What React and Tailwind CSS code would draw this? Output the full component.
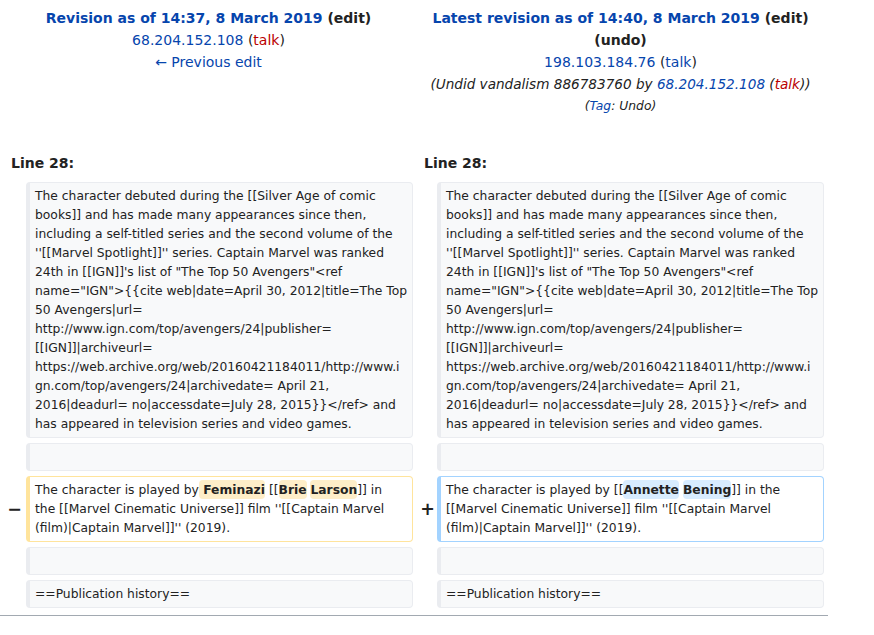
import React from "react";

const LINES = [
  "The character debuted during the [[Silver Age of comic",
  "books]] and has made many appearances since then,",
  "including a self-titled series and the second volume of the",
  "''[[Marvel Spotlight]]'' series. Captain Marvel was ranked",
  "24th in [[IGN]]'s list of \"The Top 50 Avengers\"<ref",
  "name=\"IGN\">{{cite web|date=April 30, 2012|title=The Top",
  "50 Avengers|url=",
  "http://www.ign.com/top/avengers/24|publisher=",
  "[[IGN]]|archiveurl=",
  "https://web.archive.org/web/20160421184011/http://www.i",
  "gn.com/top/avengers/24|archivedate= April 21,",
  "2016|deadurl= no|accessdate=July 28, 2015}}</ref> and",
  "has appeared in television series and video games.",
];

const cell =
  "rounded-[4px] border border-l-4 pl-[5px] pr-[5px] py-[3.5px] text-[12.32px] leading-[19px] text-[#222] whitespace-pre";
const ctx = cell + " border-[#eaecf0] bg-[#f8f9fa]";
const del = cell + " border-[#ffe49c] bg-white";
const add = cell + " border-[#a3d3ff] bg-white";
const delHl = "font-bold rounded-[4px] bg-[#feeec8] py-[2.5px]";
const addHl = "font-bold rounded-[4px] bg-[#d8ecff] py-[2.5px]";

function Lines({ lines }) {
  return lines.map((l, i) => <div key={i}>{l}</div>);
}

function Context() {
  return (
    <div className={ctx}>
      <Lines lines={LINES} />
    </div>
  );
}

function Empty() {
  return <div className={ctx}>{"\u00a0"}</div>;
}

function Pub() {
  return <div className={ctx}>==Publication history==</div>;
}

export default function App() {
  return (
    <div
      className="w-[874px] h-[635px] bg-white text-[#222] overflow-hidden"
      style={{ fontFamily: '"DejaVu Sans", sans-serif' }}
    >
      <div className="w-[828px]">
        {/* Header */}
        <div className="grid grid-cols-[409px_407px] gap-x-[4px] pl-[4px] pt-[7px] text-[14px] leading-[22px] text-center">
          <div>
            <div className="font-bold">
              <span className="text-[#0645ad]">Revision as of 14:37, 8 March 2019</span>{" "}
              <span className="text-[#222]">(edit)</span>
            </div>
            <div>
              <span className="text-[#0645ad]">68.204.152.108</span> (
              <span className="text-[#ba0000]">talk</span>)
            </div>
            <div className="text-[#0645ad]">← Previous edit</div>
          </div>
          <div>
            <div className="font-bold">
              <span className="text-[#0645ad]">Latest revision as of 14:40, 8 March 2019</span>{" "}
              <span className="text-[#222]">(edit)</span>
            </div>
            <div className="font-bold text-[#222]">(undo)</div>
            <div>
              <span className="text-[#0645ad]">198.103.184.76</span> (
              <span className="text-[#0645ad]">talk</span>)
            </div>
            <div className="italic text-[13.6px]">
              (Undid vandalism 886783760 by{" "}
              <span className="text-[#0645ad]">68.204.152.108</span> (
              <span className="text-[#ba0000]">talk</span>))
            </div>
            <div className="italic text-[12.32px]">
              (<span className="text-[#0645ad]">Tag</span>: Undo)
            </div>
          </div>
        </div>

        {/* Line numbers */}
        <div className="grid grid-cols-[409px_407px] gap-x-[4px] pl-[4px] mt-[35px] text-[14px] leading-[22px] font-bold text-[#222]">
          <div className="pl-[7px]">Line 28:</div>
          <div className="pl-[7px]">Line 28:</div>
        </div>

        {/* Diff table */}
        <div className="grid grid-cols-[18px_387px_16px_387px] gap-x-[4px] gap-y-[5px] pl-[4px] mt-[8px]">
          <div />
          <Context />
          <div />
          <Context />

          <div />
          <Empty />
          <div />
          <Empty />

          <div className="flex items-center justify-end text-[17.5px] leading-[1.2] font-bold text-[#222]">
            −
          </div>
          <div className={del}>
            <div>
              The character is played by<span className={delHl}> Feminazi</span> [[
              <span className={delHl}>Brie</span> <span className={delHl}>Larson</span>]] in
            </div>
            <div>the [[Marvel Cinematic Universe]] film ''[[Captain Marvel</div>
            <div>(film)|Captain Marvel]]'' (2019).</div>
          </div>
          <div className="flex items-center justify-end text-[17.5px] leading-[1.2] font-bold text-[#222] mr-[-2px]">
            +
          </div>
          <div className={add}>
            <div>
              The character is played by [[<span className={addHl}>Annette</span>{" "}
              <span className={addHl}>Bening</span>]] in the
            </div>
            <div>[[Marvel Cinematic Universe]] film ''[[Captain Marvel</div>
            <div>(film)|Captain Marvel]]'' (2019).</div>
          </div>

          <div />
          <Empty />
          <div />
          <Empty />

          <div />
          <Pub />
          <div />
          <Pub />
        </div>

        <div className="mt-[7px] h-px bg-[#a2a9b1]" />
      </div>
    </div>
  );
}
